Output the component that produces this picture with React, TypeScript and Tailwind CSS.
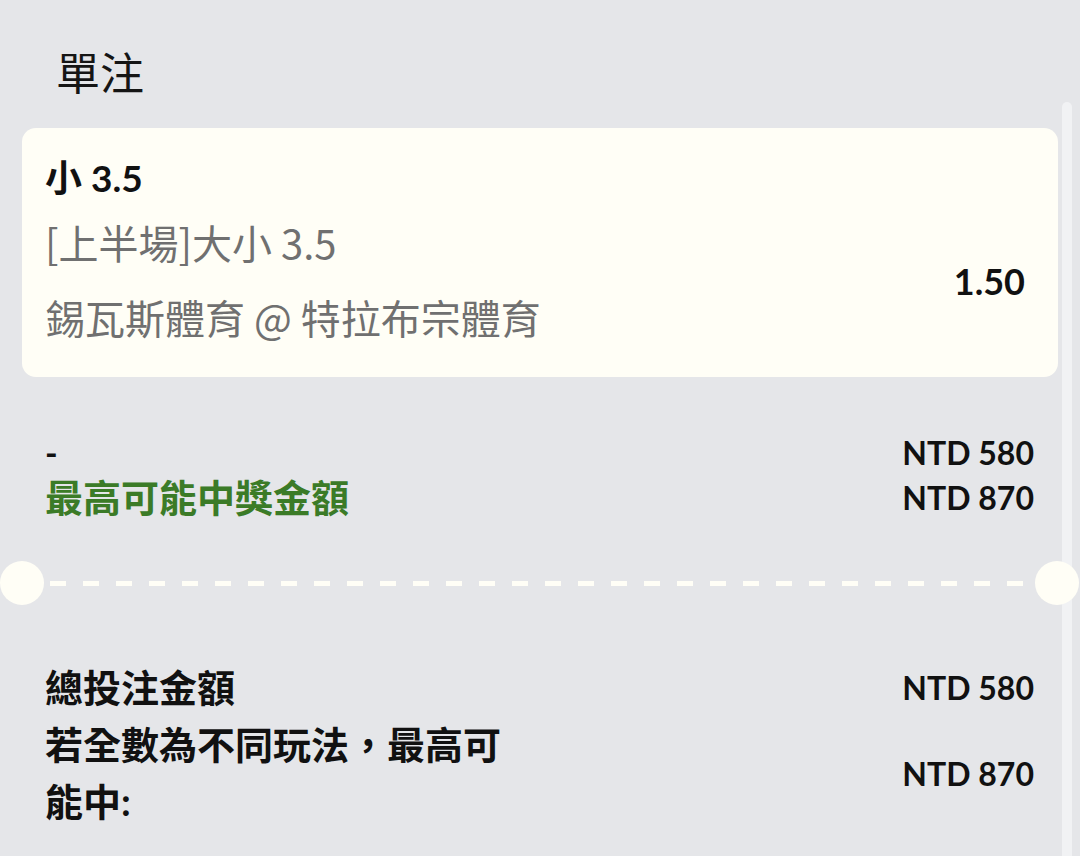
import React from "react";

const FONT = "font-['Lato','Noto_Sans_CJK_TC',sans-serif]";

export default function App() {
  return (
    <div
      className={`relative w-[1080px] h-[856px] overflow-hidden bg-[#e5e6e9] text-[#111] ${FONT}`}
    >
      {/* scrollbar track */}
      <div className="absolute left-[1062px] top-[102px] w-[10px] h-[800px] rounded-full bg-[#f1f2f4]" />

      {/* title */}
      <div className="pl-[56px] pt-[49px] h-[128px] text-[44px] leading-[48px] font-normal text-[#151515]">
        單注
      </div>

      {/* bet card */}
      <div className="relative mx-[22px] w-[1036px] h-[249px] rounded-[14px] bg-[#fffef6] flex justify-between pl-[23px] pr-[33px]">
        <div className="flex flex-col pt-[26px]">
          <div className="h-[48px] leading-[48px] text-[37px] font-bold text-[#111]">
            小 3.5
          </div>
          <div className="mt-[16px] h-[48px] leading-[48px] text-[40px] text-[#707070] font-['Noto_Sans_CJK_TC',sans-serif]">
            [上半場]大小 3.5
          </div>
          <div className="mt-[27px] h-[48px] leading-[48px] text-[40px] text-[#707070] font-['Noto_Sans_CJK_TC',sans-serif]">
            錫瓦斯體育 @ 特拉布宗體育
          </div>
        </div>
        <div className="flex items-start pt-[130px]">
          <div className="h-[46px] leading-[46px] text-[36px] font-bold text-[#111]">1.50</div>
        </div>
      </div>

      {/* summary */}
      <div className="pl-[45px] pr-[46px] pt-[53px]">
        <div className="flex justify-between h-[45px] leading-[45px]">
          <span className="text-[34px] font-bold">-</span>
          <span className="text-[32px] font-bold">NTD 580</span>
        </div>
        <div className="flex justify-between h-[45px] leading-[45px]">
          <span className="text-[38px] font-bold text-[#3b7b27]">最高可能中獎金額</span>
          <span className="text-[32px] font-bold">NTD 870</span>
        </div>
      </div>

      {/* separator */}
      <div className="relative z-10 mt-[41px] h-[44px] flex items-center">
        <div className="w-[44px] h-[44px] rounded-full bg-[#fffef6] shrink-0" />
        <div className="flex-1 ml-[6px] mr-[4px] h-[5px] bg-[repeating-linear-gradient(90deg,#fffef6_0px,#fffef6_16px,transparent_16px,transparent_33px)]" />
        <div className="w-[44px] h-[44px] rounded-full bg-[#fffef6] shrink-0 mr-[1px]" />
      </div>

      {/* totals */}
      <div className="pl-[45px] pr-[46px] pt-[54px]">
        <div className="flex justify-between items-center h-[57px]">
          <span className="text-[38px] leading-[57px] font-bold">總投注金額</span>
          <span className="text-[32px] leading-[57px] font-bold">NTD 580</span>
        </div>
        <div className="flex justify-between items-center">
          <span className="w-[480px] text-[38px] leading-[57px] font-bold">
            若全數為不同玩法，最高可能中:
          </span>
          <span className="text-[32px] leading-[57px] font-bold">NTD 870</span>
        </div>
      </div>
    </div>
  );
}
